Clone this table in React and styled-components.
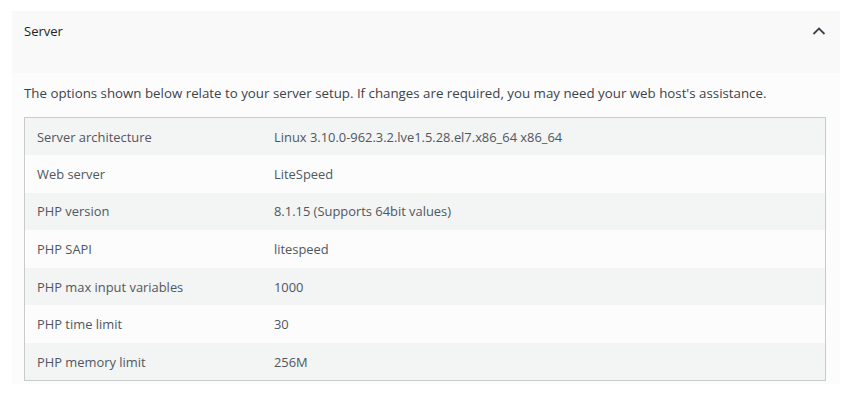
import React from "react";
import styled, { createGlobalStyle } from "styled-components";

const rows = [
  ["Server architecture", "Linux 3.10.0-962.3.2.lve1.5.28.el7.x86_64 x86_64"],
  ["Web server", "LiteSpeed"],
  ["PHP version", "8.1.15 (Supports 64bit values)"],
  ["PHP SAPI", "litespeed"],
  ["PHP max input variables", "1000"],
  ["PHP time limit", "30"],
  ["PHP memory limit", "256M"],
];

const App = () => {
  return (
    <>
      <GlobalStyle />
      <Panel>
        <Header>
          <Title>Server</Title>
          <Chevron viewBox="0 0 14 10" aria-hidden="true">
            <path d="M1.5 8 L7 2.5 L12.5 8" />
          </Chevron>
        </Header>
        <Body>
          <Intro>
            The options shown below relate to your server setup. If changes are
            required, you may need your web host's assistance.
          </Intro>
          <Table>
            <tbody>
              {rows.map(([label, value], i) => (
                <Row key={label} $odd={i % 2 === 0}>
                  <Label>{label}</Label>
                  <Value>{value}</Value>
                </Row>
              ))}
            </tbody>
          </Table>
        </Body>
      </Panel>
    </>
  );
};

export default App;

const GlobalStyle = createGlobalStyle`
  body {
    margin: 0;
    background: #ffffff;
    font-family: "Open Sans", "Noto Sans", sans-serif;
  }
`;

const Panel = styled.section`
  margin: 11px 10px 0 12px;
  width: 828px;
`;

const Header = styled.div`
  height: 62px;
  display: flex;
  align-items: center;
  justify-content: space-between;
  padding: 0 14px 0 12px;
  background: #f9f9f9;
  box-sizing: border-box;
`;

const Title = styled.h3`
  margin: 0;
  font-size: 13px;
  font-weight: 400;
  color: #1d2327;
  position: relative;
  top: -11px;
`;

const Chevron = styled.svg`
  width: 14px;
  height: 10px;
  position: relative;
  top: -11px;
  fill: none;
  stroke: #3c434a;
  stroke-width: 1.8;
`;

const Body = styled.div`
  background: #fcfcfc;
  padding: 10px 14px 3px 12px;
`;

const Intro = styled.p`
  margin: 0 0 14px;
  font-size: 13.3px;
  line-height: 20px;
  color: #3c434a;
  white-space: nowrap;
`;

const Table = styled.table`
  width: 100%;
  table-layout: fixed;
  border-collapse: collapse;
  border: 1px solid #c8cacc;
  font-size: 12.9px;
  color: #50575e;
`;

const Row = styled.tr`
  height: 37.6px;
  background: ${(p) => (p.$odd ? "#f3f4f4" : "#fcfcfc")};
`;

const Label = styled.td`
  width: 213px;
  padding: 0 12px;
`;

const Value = styled.td`
  padding: 0 12px;
`;
